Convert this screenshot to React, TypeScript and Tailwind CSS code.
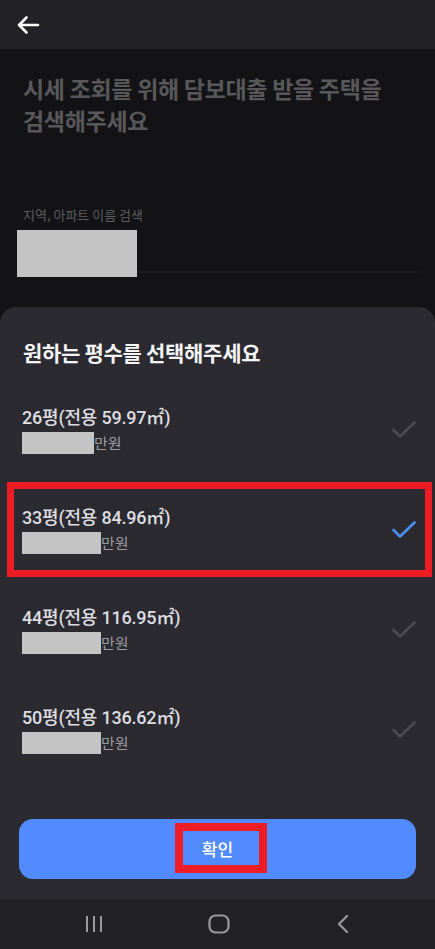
import React from "react";

const sizes = [
  { title: "26평(전용 59.97㎡)", blank: 72, selected: false },
  { title: "33평(전용 84.96㎡)", blank: 79, selected: true },
  { title: "44평(전용 116.95㎡)", blank: 79, selected: false },
  { title: "50평(전용 136.62㎡)", blank: 79, selected: false },
];

function Check({ active }: { active: boolean }) {
  return (
    <svg width="24" height="18" viewBox="0 0 24 18" fill="none">
      <polyline
        points="1.5,9 8,15.5 22.5,1.5"
        stroke={active ? "#4f8ef7" : "#4a4a52"}
        strokeWidth="2.6"
        strokeLinecap="round"
        strokeLinejoin="round"
      />
    </svg>
  );
}

export default function App() {
  return (
    <div
      className="w-[435px] h-[949px] flex flex-col bg-[#131315] overflow-hidden"
      style={{ fontFamily: '"Noto Sans CJK KR", "Noto Sans", sans-serif' }}
    >
      {/* Header (dimmed) */}
      <div className="h-[49px] shrink-0 bg-[#212126] flex items-center pl-[16px]">
        <svg width="24" height="20" viewBox="0 0 24 20" fill="none">
          <path
            d="M22 10H3M10.5 2.5L3 10l7.5 7.5"
            stroke="#ffffff"
            strokeWidth="2.6"
            strokeLinecap="round"
            strokeLinejoin="round"
          />
        </svg>
      </div>

      {/* Page behind the sheet */}
      <div className="flex-1 px-[23px] pt-[23px]">
        <h1 className="text-[23px] leading-[32px] font-bold text-[#58585b] tracking-[-0.3px]">
          시세 조회를 위해 담보대출 받을 주택을
          <br />
          검색해주세요
        </h1>
        <p className="mt-[70px] text-[13px] leading-[18px] text-[#5b5b5e]">지역, 아파트 이름 검색</p>
        <div className="relative -ml-[6px] mt-[6px] h-[47px]">
          <div className="absolute left-0 right-[-6px] bottom-[4px] h-[2px] bg-[#1d1d20]" />
          <div className="relative w-[120px] h-[47px] bg-[#c4c4c4]" />
        </div>
      </div>

      {/* Bottom sheet */}
      <div className="h-[592px] shrink-0 bg-[#2a2a30] rounded-t-[16px] flex flex-col">
        <h2 className="pt-[31px] px-[23px] text-[21px] leading-[29px] font-bold text-[#f4f4f6] tracking-[-0.3px]">
          원하는 평수를 선택해주세요
        </h2>

        <ul className="mt-[13px] flex flex-col">
          {sizes.map((s) => (
            <li key={s.title} className="relative h-[100px] flex items-center justify-between pl-[22px] pr-[19px]">
              <div className="flex flex-col">
                <span
                  className="text-[18px] leading-[24px] font-medium text-[#dedee2] tracking-[-0.2px]"
                  style={{ fontFamily: 'Roboto, "Noto Sans CJK KR", sans-serif' }}
                >
                  {s.title}
                </span>
                <div className="flex items-center mt-[2px]">
                  <div className="h-[22px] bg-[#c4c4c4]" style={{ width: s.blank }} />
                  <span className="text-[15px] leading-[22px] text-[#9c9ca2]">만원</span>
                </div>
              </div>
              <Check active={s.selected} />
              {s.selected && (
                <div className="absolute left-[7px] right-[3px] top-[2px] bottom-[3px] border-[7px] border-[#ee1c25]" />
              )}
            </li>
          ))}
        </ul>

        <div className="mt-auto px-[19px] pb-[20px]">
          <button className="relative w-full h-[60px] rounded-[14px] bg-[#528bff] text-white text-[17px] font-medium">
            확인
            <span className="absolute left-[156px] top-[4px] w-[92px] h-[50px] border-[8px] border-[#ee1c25]" />
          </button>
        </div>
      </div>

      {/* System nav bar */}
      <div className="h-[50px] shrink-0 bg-[#222226] flex items-center pl-[85px]">
        <svg width="18" height="18" viewBox="0 0 18 18" fill="none">
          <path d="M2 1v16M9 1v16M16 1v16" stroke="#9a9a9e" strokeWidth="2" />
        </svg>
        <svg className="ml-[105px]" width="22" height="20" viewBox="0 0 22 20" fill="none">
          <rect x="1.5" y="1.5" width="19" height="17" rx="6" stroke="#9a9a9e" strokeWidth="2.2" />
        </svg>
        <svg className="ml-[106px]" width="14" height="20" viewBox="0 0 14 20" fill="none">
          <path d="M11 2L3 10l8 8" stroke="#9a9a9e" strokeWidth="2.2" strokeLinecap="round" strokeLinejoin="round" />
        </svg>
      </div>
    </div>
  );
}
